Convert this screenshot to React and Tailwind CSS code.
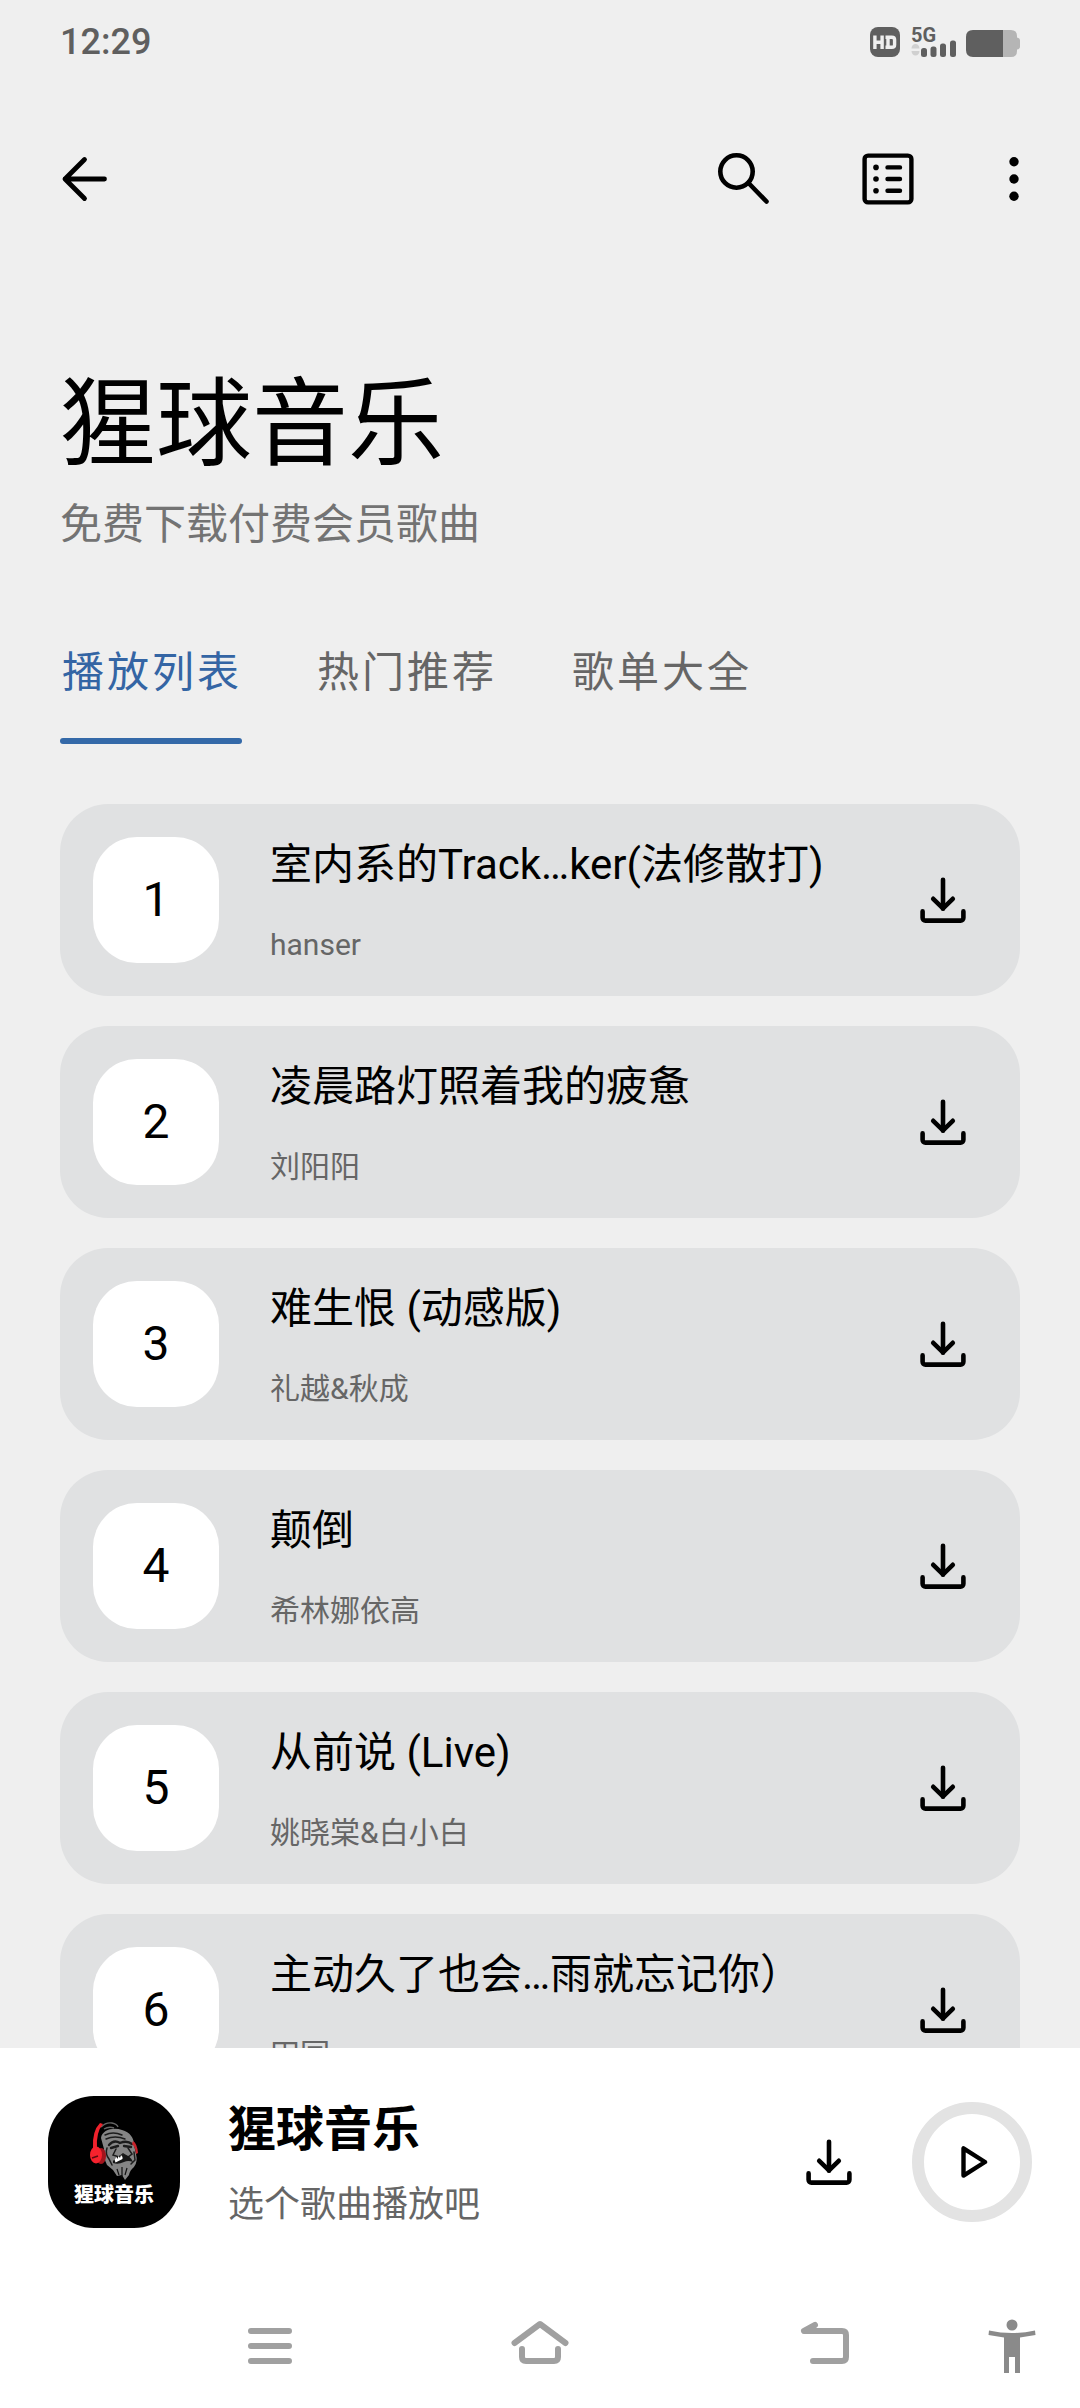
import React, { useState } from "react";

const tabs = ["播放列表", "热门推荐", "歌单大全"];

const songs = [
  { id: 1, title: "室内系的Track…ker(法修散打)", artist: "hanser" },
  { id: 2, title: "凌晨路灯照着我的疲惫", artist: "刘阳阳" },
  { id: 3, title: "难生恨 (动感版)", artist: "礼越&秋成" },
  { id: 4, title: "颠倒", artist: "希林娜依高" },
  { id: 5, title: "从前说 (Live)", artist: "姚晓棠&白小白" },
  { id: 6, title: "主动久了也会…雨就忘记你）", artist: "田园" },
];

function DownloadIcon() {
  return (
    <svg
      width="46"
      height="46"
      viewBox="0 0 46 46"
      fill="none"
      stroke="currentColor"
      strokeWidth="4.6"
      strokeLinecap="round"
      strokeLinejoin="round"
    >
      <path d="M23 2.8v29" />
      <path d="M13.2 21.8 23 31.4l9.8-9.6" />
      <path d="M2.6 34.4v6.4a2.8 2.8 0 0 0 2.8 2.8h35.2a2.8 2.8 0 0 0 2.8-2.8v-6.4" />
    </svg>
  );
}

function StatusBar() {
  return (
    <div className="flex h-[84px] items-center justify-between px-[60px] text-[#5f5f5f]">
      <span className="text-[36px] leading-[42px] font-medium">12:29</span>
      <svg width="150" height="50" viewBox="0 -10 150 50" fill="currentColor">
        {/* HD badge */}
        <rect width="30" height="30" rx="8" />
        <g fill="none" stroke="#efefef" strokeWidth="3.4">
          <path d="M4.9 8.5v13.500M12.100 8.500v13.500M4.900 15.200h7.200" />
          <path d="M15.500 10.200h6.300q2.800 0 2.800 2.600v4.900q0 2.600-2.800 2.600h-6.300M18 8.500v13.500" />
        </g>
        {/* Network */}
        <text x="41" y="14.500" fontSize="20" fontWeight="700" fontFamily="Roboto, sans-serif">
          5G
        </text>
        <path
          d="M41.500 21.500a4 4.500 0 0 1 8 0zM41.500 24h8a4 4.500 0 0 1-8 0z"
          fill="#d0d0d0"
        />
        <rect x="51" y="21" width="6" height="9" rx="2.500" />
        <rect x="60.500" y="19.500" width="6" height="10.500" rx="2.500" />
        <rect x="70" y="16.500" width="6" height="13.500" rx="2.500" />
        <rect x="80" y="13.500" width="6" height="16.500" rx="2.500" />
        {/* Battery */}
        <path
          d="M133 3h8q6 0 6 6v1.500q3 .5 3 3v6q0 2.500-3 3v1.500q0 6-6 6h-8z"
          fill="#b5b5b5"
        />
        <path d="M133 3h-30q-7 0-7 7v13q0 7 7 7h30z" />
      </svg>
    </div>
  );
}

function Toolbar() {
  return (
    <header className="flex items-center justify-between px-[60px] py-[67px]">
      <button type="button" aria-label="返回">
        <svg
          width="48"
          height="56"
          viewBox="0 0 48 56"
          fill="none"
          stroke="currentColor"
          strokeWidth="4.8"
          strokeLinecap="round"
          strokeLinejoin="round"
        >
          <path d="M44.500 28H5M24.500 8.500 5 28l19.500 19.500" />
        </svg>
      </button>
      <div className="flex items-center">
        <button type="button" aria-label="搜索">
          <svg
            width="56"
            height="56"
            viewBox="0 0 56 56"
            fill="none"
            stroke="currentColor"
            strokeWidth="4.6"
            strokeLinecap="round"
          >
            <circle cx="22.500" cy="20.500" r="16.200" />
            <path d="M34.500 32 52.500 50.500" />
          </svg>
        </button>
        <button type="button" aria-label="列表" className="ml-[90px]">
          <svg
            width="56"
            height="56"
            viewBox="0 0 56 56"
            fill="none"
            stroke="currentColor"
            strokeWidth="4.4"
            strokeLinecap="round"
          >
            <rect x="4.600" y="4.600" width="46.800" height="46.800" rx="3.500" />
            <path d="M27.500 16.400h12.500M27.500 28h12.500M27.500 39.700h12.500" />
            <g fill="currentColor" stroke="none">
              <circle cx="16" cy="16.400" r="2.800" />
              <circle cx="16" cy="28" r="2.800" />
              <circle cx="16" cy="39.700" r="2.800" />
            </g>
          </svg>
        </button>
        <button type="button" aria-label="更多" className="ml-[90px]">
          <svg width="14" height="56" viewBox="0 0 14 56" fill="currentColor">
            <circle cx="8" cy="10.700" r="4.700" />
            <circle cx="8" cy="28" r="4.700" />
            <circle cx="8" cy="45.300" r="4.700" />
          </svg>
        </button>
      </div>
    </header>
  );
}

function SongCard({ song }) {
  return (
    <li className="flex shrink-0 items-center rounded-[48px] bg-[#e0e1e2] py-[33px] pr-[54px] pl-[33px]">
      <span className="flex size-[126px] shrink-0 items-center justify-center rounded-[44px] bg-white text-[48px] leading-[56px]">
        {song.id}
      </span>
      <div className="ml-[51px] flex min-w-0 flex-1 flex-col gap-[34px]">
        <h2 className="truncate text-[42px] leading-[56px]">{song.title}</h2>
        <p className="truncate text-[30px] leading-[36px] text-[#666]">
          {song.artist}
        </p>
      </div>
      <button type="button" aria-label={`下载 ${song.title}`}>
        <DownloadIcon />
      </button>
    </li>
  );
}

function Logo() {
  return (
    <svg
      width="132"
      height="132"
      viewBox="0 0 132 132"
      className="shrink-0"
      role="img"
      aria-label="猩球音乐"
    >
      <rect width="132" height="132" rx="46" fill="#000" />
      {/* Gorilla head */}
      <path
        d="M53 42C54 34 65 31 74 34c8 2 12 8 12 15l2 9q2 8-2 13-4 3-5 8l-4 5-3-5-5 1-4-6-6-5q-4-8-3-16z"
        fill="#858585"
      />
      <path
        d="M53 31q5-5 11-4 5 1 6 4M56 33q5-3 10-1"
        fill="none"
        stroke="#666"
        strokeWidth="1.4"
      />
      <g fill="none" stroke="#1c1c1c" strokeWidth="1.5" strokeLinecap="round">
        <path d="M57 39q8-4 17 0M58 43q9-4 19 0" />
        <path d="M61 49q5-6 11-2 7-3 12 1M63 52l7-2M76 50l7 1" strokeWidth="2.4" />
        <path d="M68 53l-3 6 6 2 4-3 5 3 4-3-4-6" />
        <path d="M59 52q-2 6 2 11l3 6M86 56l1 8-4 4" />
      </g>
      <path d="M65 65q5-7 11-6 7 1 9 7-5-2-9 0-6 3-11 1z" fill="#161616" />
      <path d="M66.500 63.500l2-2.500 1 2 1-3 1.500 2 1-3 1.500 2v2l-7 3.500z" fill="#fff" />
      <path d="M69 73l2 6M74 71v10M79 72l-2 7" stroke="#111" strokeWidth="1.2" />
      {/* Headphones */}
      <path d="M52 27q-8 8-7 25h4q-1-16 6-24z" fill="#f0222c" />
      <path d="M85 45q4 2 5 12l-2 1q-1-8-4-10z" fill="#c8232b" />
      <ellipse cx="53" cy="60" rx="5" ry="8" fill="#a3141c" />
      <ellipse cx="48" cy="59" rx="6" ry="8.500" fill="#f5222d" />
      <path d="M44 62l6-2" stroke="#5c0b10" strokeWidth="1.4" />
      <text
        x="66"
        y="106"
        textAnchor="middle"
        fill="#fff"
        fontSize="20"
        fontWeight="900"
        fontFamily="'Noto Sans CJK SC', sans-serif"
      >
        猩球音乐
      </text>
    </svg>
  );
}

function Player() {
  return (
    <section className="flex items-center bg-white px-[48px] pt-[48px] pb-[57px]">
      <Logo />
      <div className="ml-[48px] flex min-w-0 flex-1 flex-col gap-[21px]">
        <h2 className="truncate text-[48px] leading-[64px] font-bold">猩球音乐</h2>
        <p className="truncate text-[36px] leading-[44px] text-[#666]">
          选个歌曲播放吧
        </p>
      </div>
      <button type="button" aria-label="下载">
        <DownloadIcon />
      </button>
      <button
        type="button"
        aria-label="播放"
        className="ml-[60px] flex size-[120px] items-center justify-center rounded-full border-[12px] border-[#e3e3e3]"
      >
        <svg
          width="32"
          height="36"
          viewBox="0 0 32 36"
          fill="none"
          stroke="currentColor"
          strokeWidth="4.4"
          strokeLinejoin="round"
        >
          <path d="M7.500 4.400v27.200L29 18z" />
        </svg>
      </button>
    </section>
  );
}

function NavBar() {
  return (
    <nav className="flex h-[123px] items-center justify-between bg-white pr-[44px] pl-[240px] text-[#a0a0a0]">
      <div className="flex gap-[210px]">
        <button type="button" aria-label="最近任务">
          <svg
            width="60"
            height="60"
            viewBox="0 0 60 60"
            stroke="currentColor"
            strokeWidth="6"
            strokeLinecap="round"
          >
            <path d="M11 44h38M11 29h38M11 14h38" />
          </svg>
        </button>
        <button type="button" aria-label="主屏幕">
          <svg
            width="60"
            height="60"
            viewBox="0 0 60 60"
            fill="none"
            stroke="currentColor"
            strokeWidth="6"
            strokeLinecap="round"
            strokeLinejoin="round"
          >
            <path d="M4.500 26 30 7l25.500 19" />
            <path d="M12 32v8q0 4 4 4h28q4 0 4-4v-8" />
          </svg>
        </button>
        <button type="button" aria-label="后退">
          <svg
            width="90"
            height="60"
            viewBox="0 0 90 60"
            fill="none"
            stroke="currentColor"
            strokeWidth="6"
            strokeLinecap="round"
            strokeLinejoin="round"
          >
            <path d="M35 8 24 14h38q4 0 4 4v22q0 4-4 4H33" />
          </svg>
        </button>
      </div>
      <button type="button" aria-label="无障碍" className="text-[#8a8a8a]">
        <svg width="48" height="60" viewBox="0 0 48 60" fill="currentColor">
          <circle cx="24" cy="8" r="5.500" />
          <path d="M1 13.500q23 5 46 0l.5 4.500-15.500 2.500V56h-5V40h-6v16h-5V20.500L.5 18z" />
        </svg>
      </button>
    </nav>
  );
}

export default function App() {
  const [activeTab, setActiveTab] = useState(tabs[0]);

  return (
    <div className="flex h-screen flex-col overflow-hidden bg-[#efefef] font-[Roboto,'Noto_Sans_CJK_SC',sans-serif] text-black">
      <StatusBar />
      <Toolbar />

      <main className="flex min-h-0 flex-1 flex-col overflow-hidden px-[60px] pt-[79px]">
        <h1 className="text-[96px] leading-[142px]">猩球音乐</h1>
        <p className="text-[42px] leading-[60px] text-[#737373]">
          免费下载付费会员歌曲
        </p>

        {/* Tabs */}
        <div role="tablist" className="mt-[88px] flex gap-[73px]">
          {tabs.map((tab) => (
            <button
              key={tab}
              type="button"
              role="tab"
              aria-selected={tab === activeTab}
              onClick={() => setActiveTab(tab)}
              className={`text-[42px] leading-[60px] tracking-[3px] ${
                tab === activeTab ? "text-[#3465a4]" : "text-[#666]"
              }`}
            >
              <span className="pl-[2px]">{tab}</span>
              <span
                className={`mt-[35px] block h-[6px] rounded-full ${
                  tab === activeTab ? "bg-[#3469a8]" : "bg-transparent"
                }`}
              />
            </button>
          ))}
        </div>

        {/* Playlist */}
        <ul className="mt-[60px] flex min-h-0 flex-1 flex-col gap-[30px] overflow-hidden">
          {songs.map((song) => (
            <SongCard key={song.id} song={song} />
          ))}
        </ul>
      </main>

      <Player />
      <NavBar />
    </div>
  );
}
